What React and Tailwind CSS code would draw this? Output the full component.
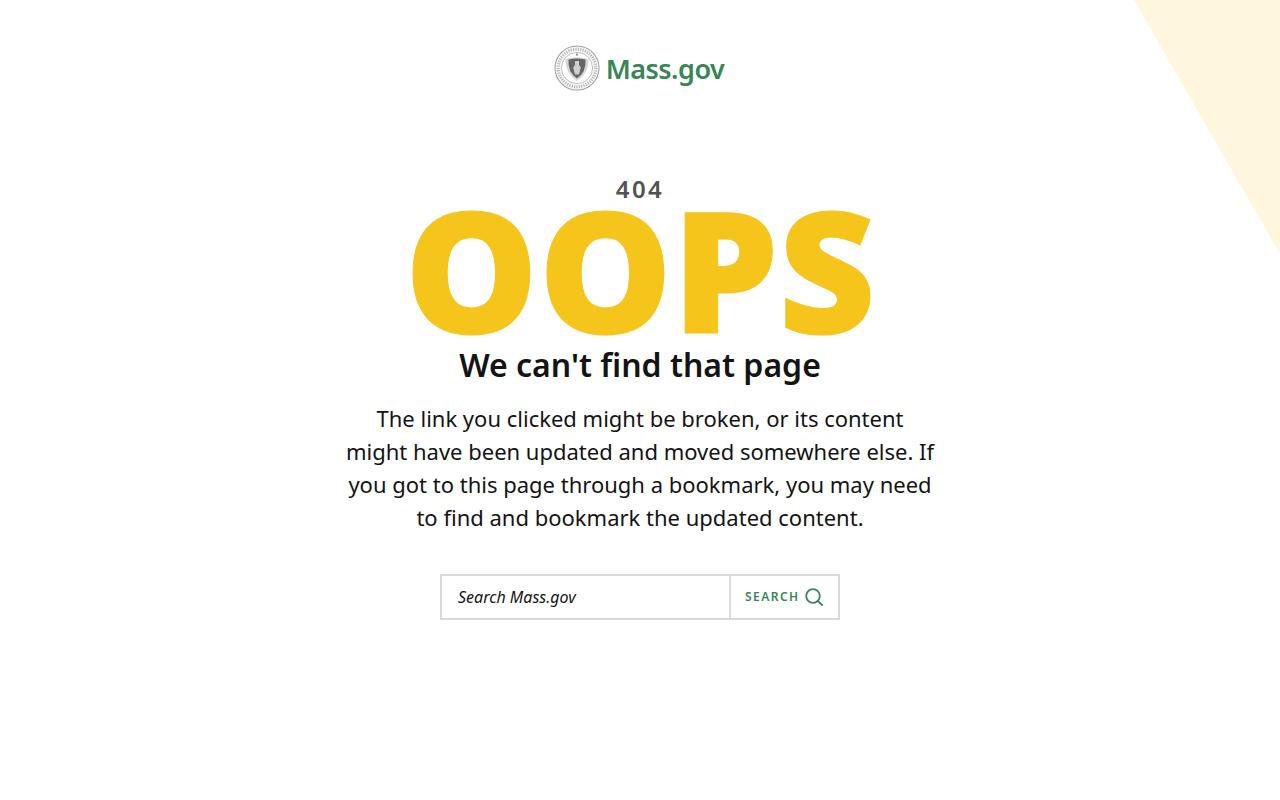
import React from "react";

function Seal() {
  return (
    <svg width="46" height="46" viewBox="0 0 46 46" className="shrink-0">
      <circle cx="23" cy="23" r="22" fill="#f7f7f7" stroke="#9f9f9f" strokeWidth="1.1" />
      <circle cx="23" cy="23" r="18.8" fill="none" stroke="#b8b8b8" strokeWidth="3" strokeDasharray="1.2 1.2" />
      <circle cx="23" cy="23" r="15.6" fill="#fff" stroke="#a8a8a8" strokeWidth="0.7" />
      <path d="M11.5 14 Q23 10.5 34.5 14 Q35 28 23 36 Q11 28 11.5 14Z" fill="#bdbdbd" opacity="0.6" />
      <path d="M14.5 14.5 Q23 12.5 31.5 14.5 Q32.5 27 23 33.5 Q13.5 27 14.5 14.5Z" fill="#666666" />
      <path d="M21 16 h4 v4 l1.8 2.5 -1.8 7 h-4 l-1.8 -7 1.8 -2.5Z" fill="#cfcfcf" />
      <path d="M23 7.5 l1.2 3 h-2.4Z" fill="#777" />
    </svg>
  );
}

export default function App() {
  return (
    <div className="relative min-h-[800px] overflow-hidden bg-white text-[#141414] font-['Noto_Sans',sans-serif]">
      <svg className="absolute top-0 right-0" width="146" height="254" viewBox="0 0 146 254">
        <polygon points="0,0 146,0 146,254" fill="#fef6dd" />
      </svg>

      <div className="relative flex flex-col items-center">
        <a className="mt-[45px] flex h-[46px] items-center gap-[6px] pr-[2px]">
          <Seal />
          <span className="translate-y-[1px] text-[27px] leading-[46px] font-semibold tracking-[-0.5px] text-[#388557]">Mass.gov</span>
        </a>

        <p className="mt-[83px] h-[30px] text-[24px] leading-[30px] font-semibold tracking-[2.4px] text-[#535353]">404</p>

        <h1 className="h-[137px] text-[168px] leading-[127px] font-extrabold text-[#f6c51b] [-webkit-text-stroke:1px_#f6c51b] font-['Open_Sans',sans-serif]">OOPS</h1>

        <h2 className="h-[48px] text-[32px] leading-[48px] font-semibold">We can't find that page</h2>

        <p className="mt-[13px] w-[592px] text-center text-[22px] leading-[33px]">
          The link you clicked might be broken, or its content might have been updated and moved somewhere else. If you got to this page through a bookmark, you may need to find and bookmark the updated content.
        </p>

        <form className="mt-[40px] flex h-[46px] w-[400px] border-2 border-[#d9d9d9]">
          <div className="flex flex-1 items-center pl-[16px] text-[16px] italic text-[#141414]">Search Mass.gov</div>
          <button type="button" className="flex w-[109px] items-center gap-[5px] border-l-2 border-[#d9d9d9] pl-[14px]">
            <span className="text-[12px] font-semibold tracking-[1.45px] text-[#388557]">SEARCH</span>
            <svg width="18" height="18" viewBox="0 0 18 18" fill="none" stroke="#388557" strokeWidth="1.8">
              <circle cx="8" cy="8" r="6.8" />
              <path d="M12.8 12.8 L17 17" strokeLinecap="round" />
            </svg>
          </button>
        </form>
      </div>
    </div>
  );
}
